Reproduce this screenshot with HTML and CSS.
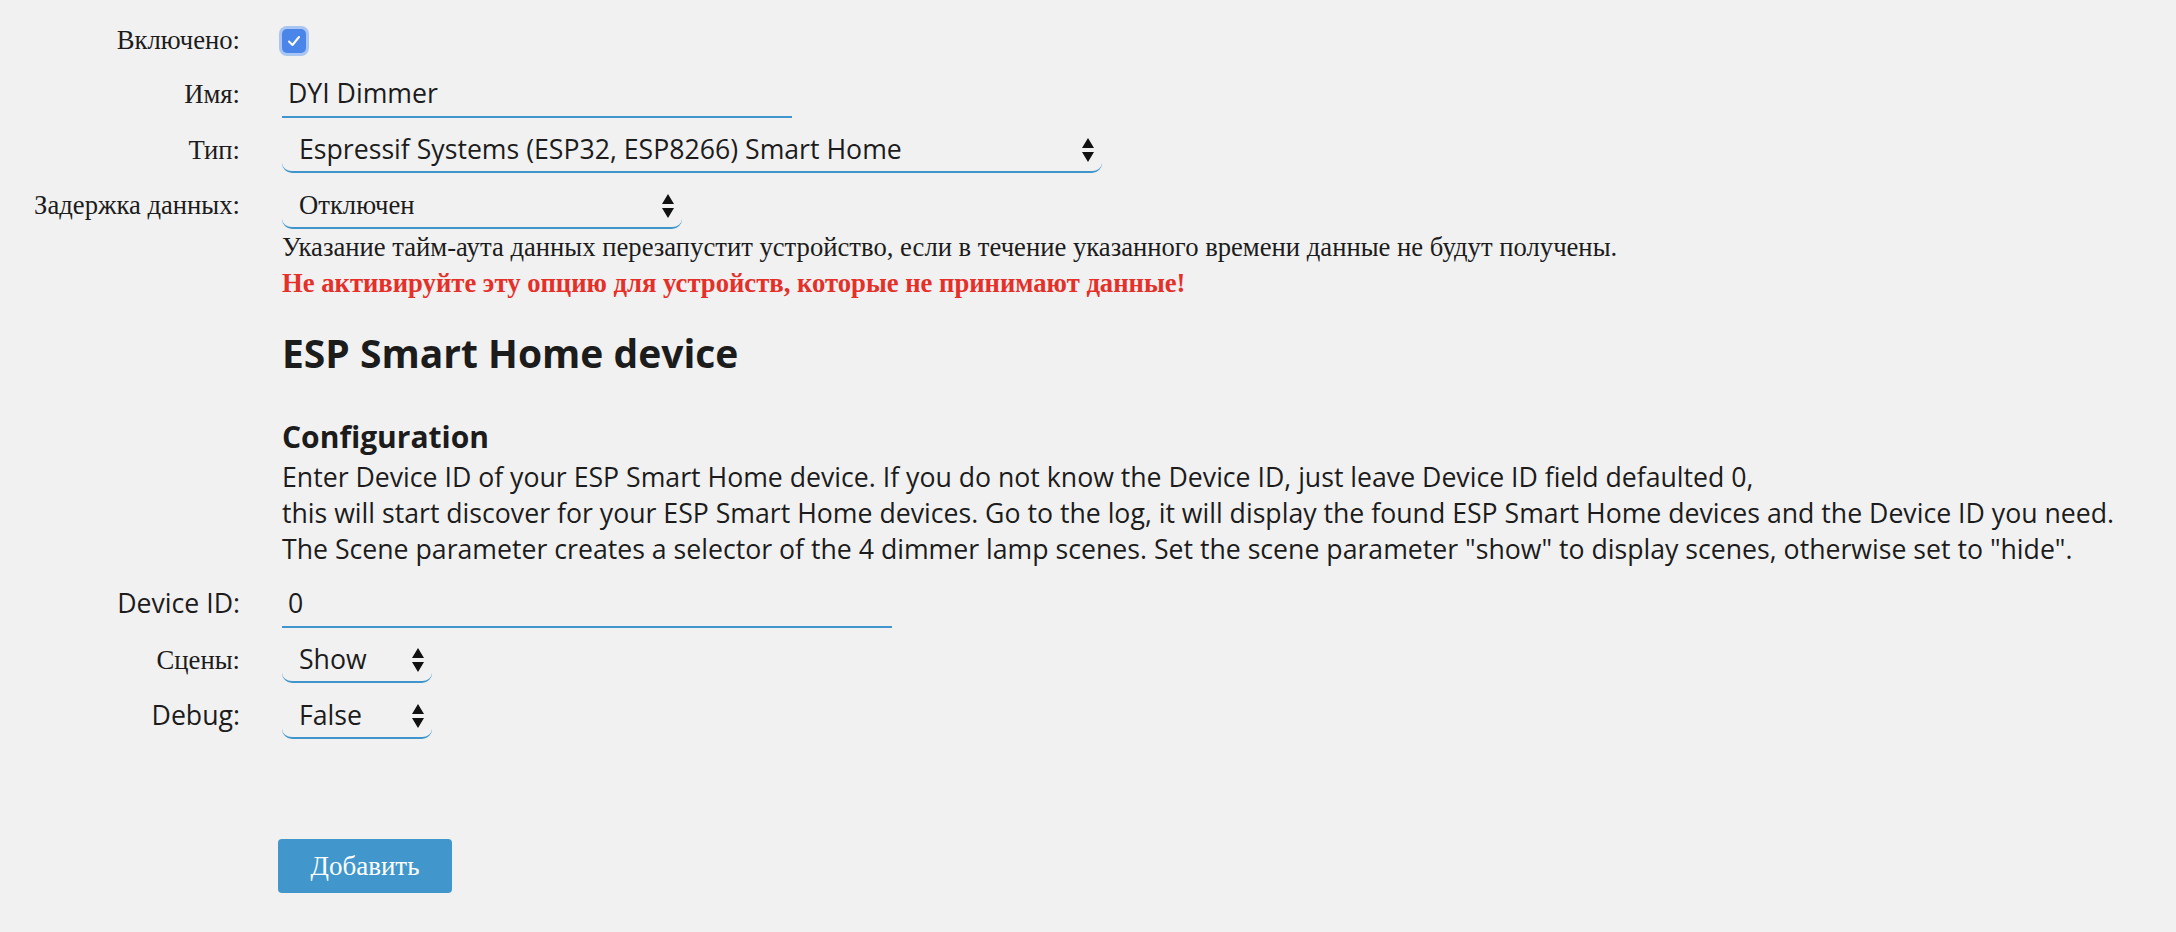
FILE: index.html
```html
<!DOCTYPE html>
<html lang="ru">
<head>
<meta charset="utf-8">
<title>Device</title>
<link rel="stylesheet" href="styles.css">
</head>
<body>
<form class="form">
  <div class="row row-check">
    <label class="label serif">Включено:</label>
    <div class="field">
      <span class="checkbox"><svg width="14" height="12" viewBox="0 0 14 12"><path d="M2 6.5 L5.5 10 L12 2" fill="none" stroke="#fff" stroke-width="2" stroke-linecap="round" stroke-linejoin="round"/></svg></span>
    </div>
  </div>

  <div class="row row-input">
    <label class="label serif">Имя:</label>
    <div class="field"><input class="text-input w-name" type="text" value="DYI Dimmer"></div>
  </div>

  <div class="row">
    <label class="label serif">Тип:</label>
    <div class="field">
      <div class="select-wrap w-type">
        <select class="select"><option>Espressif Systems (ESP32, ESP8266) Smart Home</option></select>
        <svg class="arrows" width="12" height="24" viewBox="0 0 12 24"><path d="M0 10 L6 0 L12 10 Z M0 14 L12 14 L6 24 Z" fill="#111"/></svg>
      </div>
    </div>
  </div>

  <div class="row row-delay">
    <label class="label serif">Задержка данных:</label>
    <div class="field">
      <div class="select-wrap w-delay">
        <select class="select serif-select"><option>Отключен</option></select>
        <svg class="arrows" width="12" height="24" viewBox="0 0 12 24"><path d="M0 10 L6 0 L12 10 Z M0 14 L12 14 L6 24 Z" fill="#111"/></svg>
      </div>
      <p class="help">Указание тайм-аута данных перезапустит устройство, если в течение указанного времени данные не будут получены.</p>
      <p class="help warn">Не активируйте эту опцию для устройств, которые не принимают данные!</p>
    </div>
  </div>

  <div class="section">
    <h2 class="title">ESP Smart Home device</h2>
    <h3 class="subtitle">Configuration</h3>
    <p class="desc">Enter Device ID of your ESP Smart Home device. If you do not know the Device ID, just leave Device ID field defaulted 0,<br>this will start discover for your ESP Smart Home devices. Go to the log, it will display the found ESP Smart Home devices and the Device ID you need.<br>The Scene parameter creates a selector of the 4 dimmer lamp scenes. Set the scene parameter "show" to display scenes, otherwise set to "hide".</p>
  </div>

  <div class="row row-input row-first">
    <label class="label sans">Device ID:</label>
    <div class="field"><input class="text-input w-id" type="text" value="0"></div>
  </div>

  <div class="row">
    <label class="label serif">Сцены:</label>
    <div class="field">
      <div class="select-wrap w-small">
        <select class="select"><option>Show</option></select>
        <svg class="arrows" width="12" height="24" viewBox="0 0 12 24"><path d="M0 10 L6 0 L12 10 Z M0 14 L12 14 L6 24 Z" fill="#111"/></svg>
      </div>
    </div>
  </div>

  <div class="row">
    <label class="label sans">Debug:</label>
    <div class="field">
      <div class="select-wrap w-small">
        <select class="select"><option>False</option></select>
        <svg class="arrows" width="12" height="24" viewBox="0 0 12 24"><path d="M0 10 L6 0 L12 10 Z M0 14 L12 14 L6 24 Z" fill="#111"/></svg>
      </div>
    </div>
  </div>

  <div class="actions">
    <button type="button" class="btn">Добавить</button>
  </div>
</form>
</body>
</html>
```

FILE: styles.css
```css
html, body {
  margin: 0;
  padding: 0;
  background: #f1f1f1;
}

body {
  color: #1c1c1c;
  font-family: "Open Sans", sans-serif;
  font-size: 26.67px;
}

.form {
  padding-top: 22px;
}

.row {
  display: flex;
  align-items: baseline;
  margin-bottom: 10px;
}

.row-input {
  margin-bottom: 9px;
}

.row-check {
  align-items: center;
  margin-bottom: 12px;
}

.row-first {
  margin-top: 13px;
}

.label {
  width: 240px;
  margin-right: 42px;
  text-align: right;
  line-height: 36px;
  flex: none;
}

.serif {
  font-family: "Liberation Serif", serif;
  font-size: 26.67px;
}

.sans {
  font-family: "Open Sans", sans-serif;
  font-size: 26.67px;
}

.field {
  flex: none;
}

.checkbox {
  display: flex;
  align-items: center;
  justify-content: center;
  width: 24px;
  height: 24px;
  margin-top: 2px;
  border-radius: 5px;
  background: #4a86ea;
  box-shadow: 0 0 0 3px #a9c5f2;
}

.text-input {
  display: block;
  box-sizing: border-box;
  height: 48px;
  padding: 4px 6px 6px;
  border: 0;
  border-bottom: 2px solid #4096cc;
  background: transparent;
  color: #1c1c1c;
  font-family: "Open Sans", sans-serif;
  font-size: 26.67px;
  line-height: 36px;
  outline: none;
}

.w-name { width: 510px; }
.w-id { width: 610px; }

.select-wrap {
  position: relative;
}

.w-type { width: 820px; }
.w-delay { width: 400px; }
.w-small { width: 150px; }

.select {
  display: block;
  box-sizing: border-box;
  width: 100%;
  height: 46px;
  padding: 4px 40px 4px 17px;
  border: 0;
  border-bottom: 2px solid #4096cc;
  border-radius: 10px;
  background: transparent;
  color: #1c1c1c;
  font-family: "Open Sans", sans-serif;
  font-size: 26.67px;
  line-height: 36px;
  -webkit-appearance: none;
  appearance: none;
  outline: none;
}

.serif-select {
  font-family: "Liberation Serif", serif;
}

.arrows {
  position: absolute;
  right: 8px;
  bottom: 11px;
}

.help {
  margin: 0;
  font-family: "Liberation Serif", serif;
  font-size: 26.67px;
  line-height: 36px;
}

.warn {
  color: #e5302a;
  font-weight: bold;
}

.section {
  margin-left: 282px;
}

.title {
  margin: 28px 0 0;
  font-size: 39px;
  line-height: 48px;
  font-weight: 700;
}

.subtitle {
  margin: 42px 0 0;
  font-size: 30px;
  line-height: 36px;
  font-weight: 700;
}

.desc {
  margin: 4px 0 0;
  font-size: 26.67px;
  line-height: 36px;
}

.actions {
  padding-left: 278px;
  margin-top: 100px;
}

.btn {
  width: 174px;
  height: 54px;
  border: 0;
  border-radius: 4px;
  background: #4197cb;
  color: #fff;
  font-family: "Liberation Serif", serif;
  font-size: 27px;
  cursor: pointer;
}
```
